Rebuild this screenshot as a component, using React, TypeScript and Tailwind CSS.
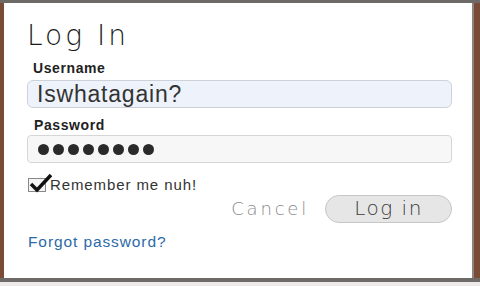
export default function App() {
  return (
    <div className="w-[480px] h-[286px] bg-[#ecebea] overflow-hidden">
      <div className="w-[480px] h-[282px] bg-[#6e6a68] pt-[3px] pb-[4px] flex">
        <div className="w-[4px] bg-[#7a4c38]" />
        <div
          className="flex-1 bg-white flex flex-col pl-[23px] pr-[20px] pt-[18px]"
          style={{ fontFamily: '"Liberation Sans", Arial, sans-serif' }}
        >
          <h1
            className="text-[28px] leading-[30px] text-[#1a1a1a] tracking-[3px]"
            style={{ fontFamily: '"DejaVu Sans", sans-serif', fontWeight: 200 }}
          >
            Log In
          </h1>
          <label className="mt-[9px] text-[14px] leading-[16px] font-bold text-[#222] pl-[6px] tracking-[0.6px]">Username</label>
          <div className="mt-[4px] h-[28px] rounded-[6px] border border-[#cdd2da] bg-[#eef3fb] flex items-center pl-[9px] text-[23px] text-[#333] tracking-[0.8px]">
            Iswhatagain?
          </div>
          <label className="mt-[9px] text-[14px] leading-[16px] font-bold text-[#222] pl-[7px] tracking-[0.6px]">Password</label>
          <div className="mt-[2px] h-[28px] rounded-[4px] border border-[#d6d6d6] bg-[#f7f7f7] flex items-center pl-[10px] gap-[4px]">
            {Array.from({ length: 8 }).map((_, i) => (
              <span key={i} className="w-[11px] h-[11px] rounded-full bg-[#2a2a2a]" />
            ))}
          </div>
          <div className="mt-[11px] flex items-center gap-[4px] pl-[1px]">
            <div className="relative w-[18px] h-[14px] border border-[#888] bg-[#f4f4f4]">
              <svg viewBox="0 0 24 20" className="absolute -top-[6px] left-0 w-[24px] h-[20px]">
                <path d="M2 11 L8 17 L22 2" fill="none" stroke="#111" strokeWidth="3.5" />
              </svg>
            </div>
            <span className="text-[15px] text-[#333] tracking-[0.9px]">Remember me nuh!</span>
          </div>
          <div className="-mt-[2px] flex justify-end items-center gap-[16px]">
            <span
              className="text-[18px] text-[#8a8a8a] tracking-[2.8px]"
              style={{ fontFamily: '"DejaVu Sans", sans-serif', fontWeight: 200 }}
            >
              Cancel
            </span>
            <button
              className="w-[127px] h-[28px] rounded-full border border-[#c6c6c6] bg-[#e6e6e6] text-[20px] leading-[24px] pb-[2px] text-[#3a3a3a] tracking-[1.5px]"
              style={{ fontFamily: '"DejaVu Sans", sans-serif', fontWeight: 200 }}
            >
              Log in
            </button>
          </div>
          <a className="mt-[7px] pl-[1px] text-[15.5px] text-[#2b6aa8] tracking-[0.9px]">Forgot password?</a>
        </div>
        <div className="w-[2px] bg-[#8a8580]" />
        <div className="w-[6px] bg-[#7a4c38]" />
      </div>
    </div>
  );
}
